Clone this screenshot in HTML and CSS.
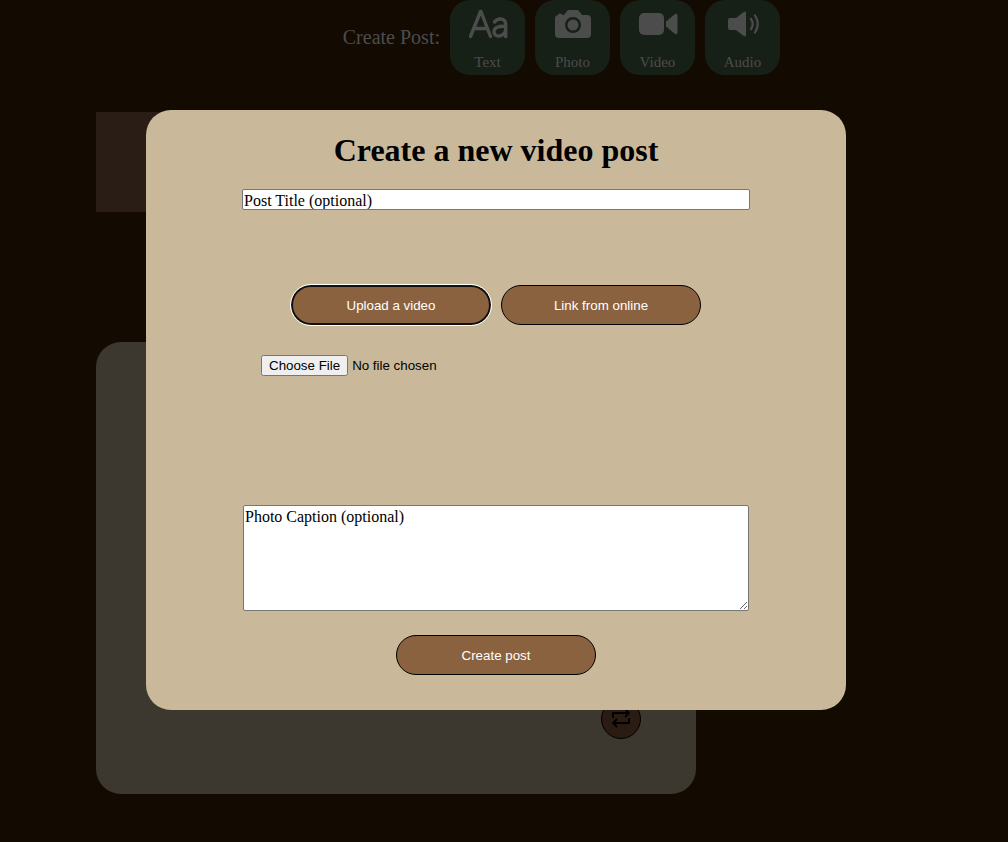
FILE: index.html
```html
<!DOCTYPE html>
<html lang="en">
<head>
<meta charset="utf-8">
<title>Create a new video post</title>
<link rel="stylesheet" href="styles.css">
</head>
<body>
<div class="page">
  <nav class="create-bar">
    <span class="create-label">Create Post:</span>
    <button class="type-button" type="button">
      <svg class="type-icon" viewBox="0 0 40 40" fill="none" stroke="currentColor" stroke-width="3.400" stroke-linecap="round" stroke-linejoin="round"><path d="M2.500 32.500L12.500 7.500h.5L22.500 32.500M6 24.500h13M26.500 18c2-3 6-3.500 8.500-2.500 2.500 1 2.700 3 2.700 5v12M37.500 22.500c-4-.5-11.500-.5-11.500 5.200 0 5.800 9 6.300 11.500-1.200"/></svg>
      <span>Text</span>
    </button>
    <button class="type-button" type="button">
      <svg class="type-icon" viewBox="0 0 40 40"><path fill="currentColor" fill-rule="evenodd" d="M5 11q0-1.500 2-1.500t2.500 1.500h1.500l3-4q1-1 2-1h8q1 0 2 1l3 4h5q4 0 4 4v15q0 4-4 4H6q-4 0-4-4V15q0-3.500 3-4zM20 13a8 8 0 1 0 0 16 8 8 0 0 0 0-16zM20 15.500a5.500 5.500 0 1 1 0 11 5.500 5.500 0 0 1 0-11z"/></svg>
      <span>Photo</span>
    </button>
    <button class="type-button" type="button">
      <svg class="type-icon" viewBox="0 0 40 40" fill="currentColor"><rect x="1" y="9" width="25" height="22" rx="5"/><path d="M28 17.500l8.500-7q3-2 3 1v17q0 3-3 1l-8.500-7z"/></svg>
      <span>Video</span>
    </button>
    <button class="type-button" type="button">
      <svg class="type-icon" viewBox="0 0 40 40"><path fill="currentColor" d="M7 14h6l7-5.500q3-2 3 .5v22q0 2.500-3 .5L13 26H7q-2 0-2-2v-8q0-2 2-2z"/><path fill="none" stroke="currentColor" stroke-width="2.200" stroke-linecap="round" d="M28 15q3.500 5 0 10M32 11.500q5.500 8.500 0 17"/></svg>
      <span>Audio</span>
    </button>
  </nav>
  <main class="feed">
    <div class="banner"></div>
    <article class="post">
      <button class="repost" type="button" aria-label="Repost">
        <svg class="repost-icon" viewBox="0 0 20 20" fill="none" stroke="currentColor" stroke-width="1.800"><path d="M2 9V4h16M14 0l4 4-4 4M18 9v5H2M6 10l-4 4 4 4"/></svg>
      </button>
    </article>
  </main>
</div>
<div class="overlay">
  <form class="modal" role="dialog" aria-labelledby="modal-title">
    <h1 class="modal-title" id="modal-title">Create a new video post</h1>
    <input class="title-input" type="text" aria-label="Post title" placeholder="Post Title (optional)">
    <div class="source-row">
      <button class="pill pill-active" type="button">Upload a video</button>
      <button class="pill" type="button">Link from online</button>
    </div>
    <div class="source-panel">
      <input class="file-input" type="file" accept="video/*" aria-label="Video file">
    </div>
    <textarea class="caption" aria-label="Caption" placeholder="Photo Caption (optional)"></textarea>
    <button class="pill" type="submit">Create post</button>
  </form>
</div>
</body>
</html>
```
FILE: styles.css
```css
* {
  box-sizing: border-box;
}

body {
  margin: 0;
  min-height: 100vh;
  background: #130b02;
  color: #4c4c4c;
  font-family: "Liberation Serif", "Times New Roman", serif;
}

.create-bar {
  display: flex;
  align-items: center;
  justify-content: flex-end;
  gap: 10px;
  padding-right: 228px;
}

.create-label {
  font-size: 20px;
}

.type-button {
  display: flex;
  flex-direction: column;
  align-items: center;
  width: 75px;
  height: 75px;
  padding: 4px 0 0;
  border: 0;
  border-radius: 20px;
  background: #172016;
  color: #4c4c4c;
  font: 15px/20px "Liberation Serif", "Times New Roman", serif;
}

.type-icon {
  flex: none;
  width: 40px;
  height: 40px;
  margin: 0 0 8px;
}

.feed {
  max-width: 696px;
  padding: 37px 0 48px 96px;
}

.banner {
  height: 100px;
  background: #2a1d16;
}

.post {
  display: flex;
  align-items: flex-end;
  justify-content: flex-end;
  height: 452px;
  margin-top: 130px;
  padding: 55px;
  border-radius: 25px;
  background: #3d382f;
}

.repost {
  display: grid;
  place-items: center;
  width: 40px;
  height: 40px;
  padding: 0;
  border: 1px solid #000;
  border-radius: 50%;
  background: #2a1c13;
  color: #000;
}

.repost-icon {
  width: 20px;
  height: 20px;
}

.overlay {
  position: fixed;
  inset: 0;
  display: flex;
  align-items: flex-start;
  justify-content: center;
  padding: 110px 16px 0 0;
}

.modal {
  display: flex;
  flex-direction: column;
  align-items: center;
  width: 100%;
  max-width: 700px;
  padding: 20px 96px 35px;
  border-radius: 25px;
  background: #c9b99a;
  color: #000;
}

.modal-title {
  margin: 0 0 19px;
  font-size: 32px;
  line-height: 40px;
}

.title-input,
.caption {
  border: 1px solid #767676;
  border-radius: 2px;
  background: #fff;
  color: #000;
  font: 16px/18px "Liberation Serif", "Times New Roman", serif;
}

.title-input {
  width: 100%;
  height: 21px;
  padding: 2px 1px 0;
}

.title-input::placeholder,
.caption::placeholder {
  color: #000;
}

.source-row {
  display: flex;
  gap: 10px;
  margin: 75px 0 30px;
}

.pill {
  width: 200px;
  height: 40px;
  border: 1px solid #000;
  border-radius: 20px;
  background: #8b6240;
  color: #fff;
  font-family: "Liberation Sans", Arial, sans-serif;
}

.pill-active {
  border: 2px solid #101010;
  outline: 1px solid #fff;
}

.source-panel {
  align-self: stretch;
  height: 150px;
  padding-left: 19px;
}

.file-input {
  display: block;
  font-family: "Liberation Sans", Arial, sans-serif;
}

.caption {
  width: calc(100% - 2px);
  height: 106px;
  margin-bottom: 24px;
  padding: 2px 1px;
  resize: both;
}
```
